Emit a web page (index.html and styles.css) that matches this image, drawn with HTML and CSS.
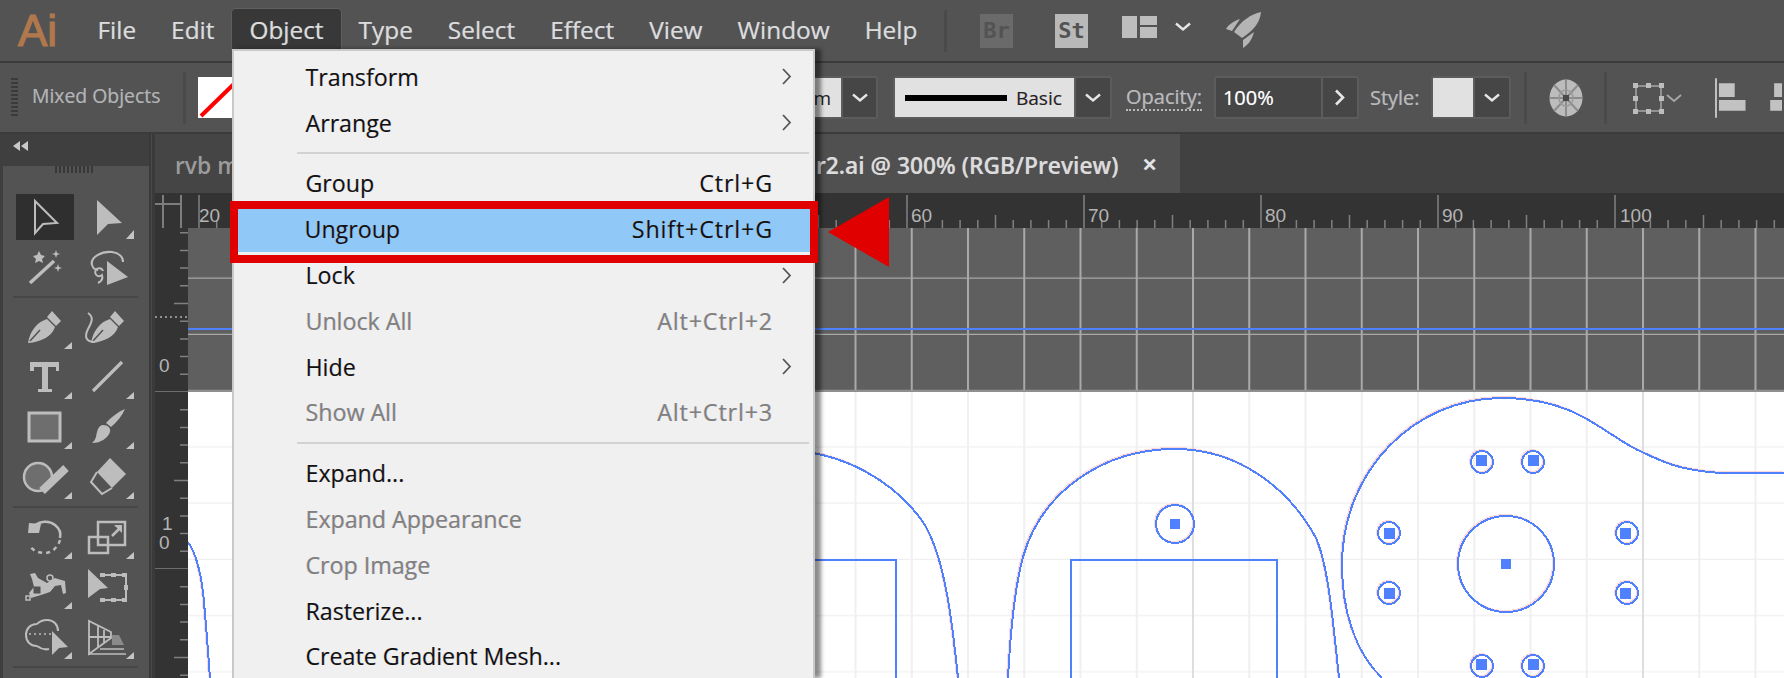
FILE: index.html
```html
<!DOCTYPE html>
<html lang="en">
<head>
    <meta charset="utf-8">
    <title>Illustrator - Object menu</title>
    <link rel="stylesheet" href="styles.css">
</head>
<body>
<div id="app">
    <div class="menubar">
        <div class="logo">Ai</div>
        <div class="menu-title">File</div>
        <div class="menu-title">Edit</div>
        <div class="menu-title open">Object</div>
        <div class="menu-title">Type</div>
        <div class="menu-title">Select</div>
        <div class="menu-title">Effect</div>
        <div class="menu-title">View</div>
        <div class="menu-title">Window</div>
        <div class="menu-title">Help</div>
        <div class="bar-sep"></div>
        <div class="app-badge br">Br</div>
        <div class="app-badge st">St</div>
        <svg class="layout-icon" width="35" height="22" viewBox="0 0 35 22"><path fill="#bdbdbd" d="M0 0h15v22H0zM18 0h17v9H18zM18 11h17v11H18z"/></svg>
        <svg class="layout-chev" width="16" height="10" viewBox="0 0 16 10"><path fill="none" stroke="#e6e6e6" stroke-width="2.4" d="M1 1.5l7 6 7-6"/></svg>
        <svg class="rocket" width="36" height="37" viewBox="1224 11 36 37"><path fill="#b4b4b4" d="M1259 11c-10 2-20 9-27 20l8 6c11-7 18-15 19-26zM1238 18c-6 2-11 5-14 10l6 2zM1252 31l-11 8v8c5-3 9-8 11-16z"/></svg>
    </div>

    <div class="controlbar">
        <div class="grip"></div>
        <div class="selection-label">Mixed Objects</div>
        <div class="bar-sep tall"></div>
        <svg class="fill-swatch" width="42" height="41" viewBox="0 0 42 41"><rect width="42" height="41" fill="#fff"/><path stroke="#f00" stroke-width="4" d="M3 39L40 3"/></svg>
        <div class="field stroke-field"><span class="field-value">m</span><span class="field-btn"><svg width="16" height="10" viewBox="0 0 16 10"><path fill="none" stroke="#e6e6e6" stroke-width="2.4" d="M1 1.5l7 6 7-6"/></svg></span></div>
        <div class="field brush-field"><span class="field-value"><span class="brush-line"></span><span class="brush-name">Basic</span></span><span class="field-btn"><svg width="16" height="10" viewBox="0 0 16 10"><path fill="none" stroke="#e6e6e6" stroke-width="2.4" d="M1 1.5l7 6 7-6"/></svg></span></div>
        <div class="ctl-label opacity-label">Opacity:</div>
        <div class="field opacity-field"><span class="opacity-value">100%</span><span class="field-btn"><svg width="11" height="17" viewBox="0 0 11 17"><path fill="none" stroke="#e6e6e6" stroke-width="2.6" d="M2 1.5l7 7-7 7"/></svg></span></div>
        <div class="ctl-label style-label">Style:</div>
        <div class="field style-field"><span class="field-value"></span><span class="field-btn"><svg width="16" height="10" viewBox="0 0 16 10"><path fill="none" stroke="#e6e6e6" stroke-width="2.4" d="M1 1.5l7 6 7-6"/></svg></span></div>
        <div class="bar-sep tall sep-a"></div>
        <svg class="globe" width="34" height="38" viewBox="0 0 34 38">
            <ellipse cx="17" cy="19" rx="16.5" ry="18.5" fill="#bcbcbc"/>
            <path fill="none" stroke="#8c8c8c" stroke-width="2" d="M17 1v36M1 19h32M5 6l24 26M29 6L5 32"/>
            <ellipse cx="17" cy="19" rx="7" ry="8" fill="none" stroke="#9a9a9a" stroke-width="1.5"/>
            <rect x="14" y="16" width="6" height="6" fill="#4a4a4a"/>
        </svg>
        <div class="bar-sep tall sep-b"></div>
        <svg class="transform-icon" width="50" height="32" viewBox="0 0 50 32">
            <path fill="none" stroke="#a8a8a8" stroke-width="1.5" d="M4 4h25v25H4z"/>
            <path fill="#bdbdbd" d="M1 1h5v5H1zM14 1h5v5h-5zM27 1h5v5h-5zM1 14h5v5H1zM27 14h5v5h-5zM1 27h5v5H1zM14 27h5v5h-5zM27 27h5v5h-5z"/>
            <path fill="none" stroke="#a8a8a8" stroke-width="1.8" d="M35 13l7 6 7-6"/>
        </svg>
        <svg class="align-icons" width="67" height="40" viewBox="1716 77 68 40">
            <path fill="#c2c2c2" d="M1716 77h2v40h-2zM1720 82h16v14h-16zM1720 99h27v11h-27zM1772 99h12v11h-12zM1776 82h8v14h-8z"/>
        </svg>
    </div>

    <div class="workarea">
        <div class="side">
            <div class="side-head"><svg width="16" height="10" viewBox="0 0 16 10"><path fill="#c8c8c8" d="M7 0v10L0 5zM15 0v10L8 5z"/></svg></div>
            <div class="tools">
                <div class="tools-grip"></div>
                <div class="tool-grid">
                    <div class="tool active"><svg width="63" height="50" viewBox="14 193 63 50"><path fill="none" stroke="#bdbdbd" stroke-width="2" d="M35 202l22 22-14 1-8 9z"/></svg></div>
                    <div class="tool"><svg width="63" height="50" viewBox="77 193 63 50"><path class="ico" d="M97 201l25 23-14 1-11 11z"/><path class="flag" d="M134 231v9h-8z"/></svg></div>
                    <div class="tool"><svg width="63" height="50" viewBox="14 243 63 50"><path class="line" stroke-width="3.5" d="M30 284l24-22"/><path class="ico" d="M39 252l2 4 4 1-3 3 1 4-4-2-4 2 1-4-3-3 4-1zM56 251l1 3 3 1-3 1-1 3-1-3-3-1 3-1zM58 265l1 3 3 1-3 1-1 3-1-3-3-1 3-1z"/></svg></div>
                    <div class="tool"><svg width="63" height="50" viewBox="77 243 63 50"><path class="line" stroke-width="2.2" d="M92 266c-2-8 10-14 20-13 7 1 11 5 11 10"/><path class="line" stroke-width="2" d="M103 272a4 4 0 1 0-1 4c1 3 0 6-4 8M92 266c1 3 3 5 6 5"/><path class="ico" d="M107 262l21 16-21 8z"/></svg></div>
                </div>
                <div class="tool-sep"></div>
                <div class="tool-grid">
                    <div class="tool"><svg width="63" height="50" viewBox="14 303 63 50"><path class="ico" d="M28 344c2-12 9-21 19-24l8 8c-3 9-13 15-27 16zM47 318l5-6 9 10-5 5z"/><path class="cut" d="M30 342l10-11"/><path class="flag" d="M72 343v7h-8z"/></svg></div>
                    <div class="tool"><svg width="63" height="50" viewBox="77 303 63 50"><path class="ico" d="M91 344c2-12 9-21 19-24l8 8c-3 9-13 15-27 16zM110 318l5-6 9 10-5 5z"/><path class="cut" d="M93 342l10-11"/><path class="line" stroke-width="2" d="M88 314c6 4 4 9 0 16-4 8-2 13 7 13"/></svg></div>
                    <div class="tool"><svg width="63" height="50" viewBox="14 353 63 50"><path class="ico" d="M30 363h29v9h-3v-4H48v22h4v3H38v-3h4V368h-8v4h-4z"/><path class="flag" d="M72 393v7h-8z"/></svg></div>
                    <div class="tool"><svg width="63" height="50" viewBox="77 353 63 50"><path class="line" stroke-width="3.2" d="M93 392l29-29"/><path class="flag" d="M134 393v7h-8z"/></svg></div>
                    <div class="tool"><svg width="63" height="50" viewBox="14 403 63 50"><rect x="29" y="414" width="31" height="28" fill="#6e6e6e" stroke="#bdbdbd" stroke-width="3"/><path class="flag" d="M72 443v7h-8z"/></svg></div>
                    <div class="tool"><svg width="63" height="50" viewBox="77 403 63 50"><path class="ico" d="M125 410c-3 7-8 13-14 18l-5-4c5-6 12-11 19-14zM103 426c5 0 8 3 7 7-2 6-9 11-18 11 4-3 4-7 5-11 1-4 3-7 6-7z"/><path class="flag" d="M134 443v7h-8z"/></svg></div>
                    <div class="tool"><svg width="63" height="50" viewBox="14 453 63 50"><circle cx="38" cy="478" r="14" fill="#6e6e6e" stroke="#bdbdbd" stroke-width="2.5"/><path class="line" stroke-width="8" stroke-linecap="butt" d="M42 492l24-23"/><path class="flag" d="M72 493v7h-8z"/></svg></div>
                    <div class="tool"><svg width="63" height="50" viewBox="77 453 63 50"><path class="ico" d="M110 459l16 16-14 14-15-16z"/><path class="line" stroke-width="2" d="M97 473l-6 10 11 12 10-6"/><path class="flag" d="M134 493v7h-8z"/></svg></div>
                </div>
                <div class="tool-sep"></div>
                <div class="tool-grid">
                    <div class="tool"><svg width="63" height="50" viewBox="14 513 63 50"><path class="line" stroke-width="2.5" d="M34 527c6-5 15-6 21-1 5 4 6 9 5 13"/><path class="line" stroke-width="2.5" stroke-dasharray="4 4" d="M60 541c-2 7-8 13-15 13-7 0-13-3-16-8"/><path class="ico" d="M29 524l12 1-2 9H28z"/><path class="flag" d="M72 553v7h-8z"/></svg></div>
                    <div class="tool"><svg width="63" height="50" viewBox="77 513 63 50"><path class="line" stroke-width="2.5" d="M98 523h27v23H98zM89 538h19v16H89z"/><path class="line" stroke-width="2.5" d="M112 537l8-8"/><path class="ico" d="M122 526v8l-8-8z"/><path class="flag" d="M134 553v7h-8z"/></svg></div>
                    <div class="tool"><svg width="63" height="50" viewBox="14 563 63 50"><path class="ico" d="M30 575l5-1 3 5 9 5 8-5 3 1 7 2 1 12-3 1-2-9-6 1-5 6-9 3-10 3-2-5 5-6-2-8z"/><circle cx="50" cy="579" r="3" fill="#535353" stroke="#bdbdbd" stroke-width="1.5"/><rect x="34" y="588" width="6" height="6" fill="#535353" stroke="#535353"/><rect x="26" y="597" width="4" height="4" fill="#535353" stroke="#bdbdbd" stroke-width="1.5"/><path class="flag" d="M72 603v7h-8z"/></svg></div>
                    <div class="tool"><svg width="63" height="50" viewBox="77 563 63 50"><path class="ico" d="M88 570l20 19-8 1-12 9z"/><path class="line" stroke-width="2" d="M101 576h25v25h-25"/><path class="ico" d="M100 574h5v4h-5zM111 574h5v4h-5zM122 574h5v4h-5zM124 586h4v5h-4zM122 599h5v4h-5zM111 599h5v4h-5zM100 599h5v4h-5z"/></svg></div>
                    <div class="tool"><svg width="63" height="50" viewBox="14 613 63 50"><path class="line" stroke-width="2" d="M37 625c-7 0-11 5-11 11s4 11 11 11M37 625c3-3 7-4 10-4 7 0 11 5 11 11M49 650c-4 1-8 0-12-3"/><path class="line" stroke-width="1.6" stroke-dasharray="2 3" d="M29 635h22"/><path class="ico" d="M52 632l16 16-9 1-7 7z"/><path class="flag" d="M72 653v7h-8z"/></svg></div>
                    <div class="tool"><svg width="63" height="50" viewBox="77 613 63 50"><path class="line" stroke-width="1.8" d="M89 622v33l22-16v-6zM89 622l22 11M98 627v22M104 631v13M89 638h22"/><path fill="#8a8a8a" d="M112 636h7l5 10h-12z"/><path class="line" stroke-width="1.6" d="M100 650h24M88 655h38"/><path class="flag" d="M134 653v7h-8z"/></svg></div>
                </div>
                <div class="tool-sep"></div>
            </div>
        </div>
        <div class="gutter"></div>
        <div class="docs">
            <div class="tabbar">
                <div class="tab inactive">rvb m</div>
                <div class="tab current"><span class="tab-name">r2.ai @ 300% (RGB/Preview)</span><span class="tab-close">&#10005;</span></div>
            </div>
            <div class="ruler-top">
                <svg class="ruler-corner" width="33" height="35" viewBox="155 193 33 35"><path fill="none" stroke="#7d7d7d" stroke-width="2" d="M155 204h26M163 195v33M181 195v33"/></svg>
                <svg class="ruler-h" width="1596" height="35" viewBox="188 193 1596 35">
                    <defs>
                        <pattern id="htick" patternUnits="userSpaceOnUse" x="906" y="193" width="177" height="35">
                            <path fill="none" stroke="#808080" stroke-width="1.5" d="M1 2v33M18.7 27v8M36.4 27v8M54.1 27v8M71.8 27v8M89.5 22v13M107.2 27v8M124.9 27v8M142.6 27v8M160.3 27v8"/>
                        </pattern>
                    </defs>
                    <rect x="188" y="193" width="1596" height="35" fill="url(#htick)"/>
                    <g class="ruler-num">
                        <text x="199" y="222">20</text>
                        <text x="911" y="222">60</text>
                        <text x="1088" y="222">70</text>
                        <text x="1265" y="222">80</text>
                        <text x="1442" y="222">90</text>
                        <text x="1620" y="222">100</text>
                    </g>
                </svg>
            </div>
            <div class="doc-body">
                <svg class="ruler-v" width="33" height="450" viewBox="155 228 33 450">
                    <defs>
                        <pattern id="vtick" patternUnits="userSpaceOnUse" x="155" y="215" width="33" height="177">
                            <path fill="none" stroke="#808080" stroke-width="1.5" d="M0 177h33M25 17.7h8M25 35.4h8M25 53.1h8M25 70.8h8M19 88.5h14M25 106.2h8M25 123.9h8M25 141.6h8M25 159.3h8"/>
                        </pattern>
                    </defs>
                    <rect x="155" y="228" width="33" height="450" fill="url(#vtick)"/>
                    <path fill="none" stroke="#b0b0b0" stroke-width="1.5" stroke-dasharray="2 3" d="M155 317h33"/>
                    <g class="ruler-num">
                        <text x="159" y="372">0</text>
                        <text x="162" y="530">1</text>
                        <text x="159" y="549">0</text>
                    </g>
                </svg>
                <svg class="canvas" width="1596" height="450" viewBox="188 228 1596 450">
                    <defs>
                        <pattern id="paste-grid" patternUnits="userSpaceOnUse" x="1192" y="222.5" width="56.25" height="56.25">
                            <path fill="none" stroke="#a9a9a9" stroke-width="2" d="M1 0v57M0 56h57"/>
                        </pattern>
                        <pattern id="board-grid" patternUnits="userSpaceOnUse" x="1192" y="391.25" width="450" height="56.25">
                            <path fill="none" stroke="#f0f0f0" stroke-width="2" d="M1 0v57M57.25 0v57M113.5 0v57M169.75 0v57M226 0v57M282.25 0v57M338.5 0v57M394.75 0v57M0 56h450"/>
                            <path fill="none" stroke="#dedede" stroke-width="2" d="M1 0v57"/>
                        </pattern>
                    </defs>
                    <rect x="188" y="228" width="1596" height="164" fill="#5f5f5f"/>
                    <rect x="188" y="228" width="1596" height="162" fill="url(#paste-grid)" shape-rendering="crispEdges"/>
                    <rect x="188" y="392" width="1596" height="286" fill="#fff"/>
                    <rect x="188" y="392" width="1596" height="286" fill="url(#board-grid)" shape-rendering="crispEdges"/>
                    <rect x="188" y="390" width="1596" height="2" fill="#8f8f8f"/>
                    <path d="M188 329h1596" stroke="#4f81ff" stroke-width="2" shape-rendering="crispEdges"/>
                    <g class="art art-pink" transform="translate(-1 -1)">
                        <use href="#artwork"/>
                    </g>
                    <g class="art art-blue">
                        <g id="artwork">
                            <path d="M188 542c7 10 12 26 15 50 3 30 5 60 7 86"/>
                            <path d="M780 450C840 450 895 480 925 525C945 560 952 620 958 678"/>
                            <path d="M1008 678C1010 640 1014 590 1023 557C1042 490 1105 449 1175 449C1240 449 1290 490 1316 538C1328 565 1333 620 1339 678"/>
                            <path d="M1382 678C1355 652 1342 610 1342 565C1342 470 1415 398 1502 398C1535 398 1562 405 1585 418C1610 432 1625 445 1642 452C1665 463 1680 470 1720 473L1784 473"/>
                            <circle cx="1175" cy="524" r="19"/>
                            <circle cx="1506" cy="564" r="48"/>
                            <circle cx="1482" cy="462" r="11"/>
                            <circle cx="1533" cy="462" r="11"/>
                            <circle cx="1389" cy="533" r="11"/>
                            <circle cx="1389" cy="593" r="11"/>
                            <circle cx="1627" cy="533" r="11"/>
                            <circle cx="1627" cy="593" r="11"/>
                            <circle cx="1482" cy="666" r="11"/>
                            <circle cx="1533" cy="666" r="11"/>
                        </g>
                        <path d="M896 678V560H300v118M1071 678V560h206v118"/>
                    </g>
                    <path fill="#4f81ff" shape-rendering="crispEdges" d="M1170 519h10v10h-10zM1501 559h10v10h-10zM1476 455h11v11h-11zM1528 455h11v11h-11zM1384 528h11v11h-11zM1384 588h11v11h-11zM1620 528h11v11h-11zM1620 588h11v11h-11zM1476 659h11v11h-11zM1528 659h11v11h-11z"/>
                </svg>
            </div>
        </div>
    </div>
</div>

<div class="menu">
    <div class="menu-row"><span>Transform</span><svg class="sub" width="10" height="17" viewBox="0 0 10 17"><path fill="none" stroke="#555" stroke-width="1.8" d="M1 1l7 7.5-7 7.5"/></svg></div>
    <div class="menu-row"><span>Arrange</span><svg class="sub" width="10" height="17" viewBox="0 0 10 17"><path fill="none" stroke="#555" stroke-width="1.8" d="M1 1l7 7.5-7 7.5"/></svg></div>
    <div class="menu-sep"></div>
    <div class="menu-row"><span>Group</span><span class="keys">Ctrl+G</span></div>
    <div class="menu-row hot"><span>Ungroup</span><span class="keys">Shift+Ctrl+G</span></div>
    <div class="menu-row"><span>Lock</span><svg class="sub" width="10" height="17" viewBox="0 0 10 17"><path fill="none" stroke="#555" stroke-width="1.8" d="M1 1l7 7.5-7 7.5"/></svg></div>
    <div class="menu-row off"><span>Unlock All</span><span class="keys">Alt+Ctrl+2</span></div>
    <div class="menu-row"><span>Hide</span><svg class="sub" width="10" height="17" viewBox="0 0 10 17"><path fill="none" stroke="#555" stroke-width="1.8" d="M1 1l7 7.5-7 7.5"/></svg></div>
    <div class="menu-row off"><span>Show All</span><span class="keys">Alt+Ctrl+3</span></div>
    <div class="menu-sep"></div>
    <div class="menu-row"><span>Expand...</span></div>
    <div class="menu-row off"><span>Expand Appearance</span></div>
    <div class="menu-row off"><span>Crop Image</span></div>
    <div class="menu-row"><span>Rasterize...</span></div>
    <div class="menu-row"><span>Create Gradient Mesh...</span></div>
</div>
<div class="callout-box"></div>
<div class="callout-arrow"></div>
</body>
</html>
```

FILE: styles.css
```css
html, body {
    margin: 0;
    padding: 0;
    overflow: hidden;
}

body {
    position: relative;
    width: 1784px;
    height: 678px;
    background: #3f3f3f;
    font-family: "Open Sans", "Noto Sans", sans-serif;
}

#app {
    display: flex;
    flex-direction: column;
    height: 678px;
}

/* top menu */
.menubar {
    display: flex;
    align-items: center;
    height: 61px;
    border-bottom: 2px solid #3b3b3b;
    background: #535353;
    box-sizing: content-box;
}

.logo {
    width: 62px;
    padding-left: 18px;
    color: #b0784c;
    font-family: "Liberation Sans", sans-serif;
    font-size: 44px;
    line-height: 50px;
    -webkit-text-stroke: 1.2px #b0784c;
}

.menu-title {
    display: flex;
    align-items: center;
    height: 40px;
    margin-bottom: 3px;
    padding: 0 17.5px;
    color: #dcdcdc;
    font-size: 24.4px;
    text-shadow: -0.6px 0 rgba(255, 200, 130, .3), 0.6px 0 rgba(110, 170, 255, .4);
}

.menu-title.open {
    border-radius: 4px 4px 0 0;
    background: #383838;
    box-shadow: 0 0 0 1px #5f5f5f;
}

.bar-sep {
    width: 3px;
    height: 42px;
    margin-left: 9px;
    background: #4a4a4a;
}

.app-badge {
    width: 33px;
    height: 34px;
    color: #535353;
    font-family: "DejaVu Sans Mono", monospace;
    font-size: 22px;
    line-height: 34px;
    text-align: center;
    font-weight: bold;
}

.app-badge.br {
    margin-left: 33px;
    background: #6a6a6a;
}

.app-badge.st {
    margin-left: 42px;
    background: #b9b9b9;
}

.layout-icon {
    margin-left: 34px;
    margin-bottom: 7px;
}

.layout-chev {
    margin-left: 18px;
    margin-bottom: 7px;
}

.rocket {
    margin-left: 35px;
}

/* control strip */
.controlbar {
    display: flex;
    align-items: center;
    height: 69px;
    border-bottom: 2px solid #3b3b3b;
    background: #535353;
    overflow: hidden;
}

.grip {
    width: 7px;
    height: 40px;
    margin-left: 11px;
    background: repeating-linear-gradient(#3a3a3a 0 2px, transparent 2px 4px);
}

.selection-label {
    width: 133px;
    margin-left: 14px;
    margin-bottom: 5px;
    color: #b4b4b4;
    font-size: 19.4px;
    white-space: nowrap;
    text-shadow: -0.5px 0 rgba(255, 200, 130, .2), 0.5px 0 rgba(110, 170, 255, .3);
}

.bar-sep.tall {
    height: 52px;
    margin-left: 18px;
}

.fill-swatch {
    margin-left: 12px;
}

.field {
    display: flex;
    height: 43px;
    box-sizing: border-box;
    border: 2px solid #5c5c5c;
    border-radius: 3px;
    background: #464646;
}

.field-value {
    display: flex;
    align-items: center;
    background: #e1e1e1;
    color: #222;
}

.field-btn {
    display: flex;
    flex: 1;
    align-items: center;
    justify-content: center;
    border-left: 2px solid #5c5c5c;
}

.stroke-field {
    width: 120px;
    margin-left: 518px;
}

.stroke-field .field-value {
    flex: none;
    width: 81px;
    padding-right: 10px;
    box-sizing: border-box;
    justify-content: flex-end;
    font-size: 19px;
}

.brush-field {
    width: 219px;
    margin-left: 15px;
}

.brush-field .field-value {
    flex: none;
    width: 179px;
}

.brush-line {
    width: 102px;
    height: 6px;
    margin-left: 10px;
    background: #000;
}

.brush-name {
    margin-left: 9px;
    font-size: 19px;
    text-shadow: -0.5px 0 rgba(255, 170, 80, .4), 0.5px 0 rgba(60, 120, 255, .4);
}

.ctl-label {
    color: #b9b9b9;
    font-size: 20px;
    font-weight: 500;
    text-shadow: -0.5px 0 rgba(255, 200, 130, .3), 0.5px 0 rgba(110, 170, 255, .4);
}

.opacity-label {
    margin-left: 14px;
    border-bottom: 2px dotted #bbb;
    line-height: 24px;
}

.opacity-field {
    width: 145px;
    margin-left: 12px;
}

.opacity-value {
    display: flex;
    align-items: center;
    width: 105px;
    padding-left: 7px;
    box-sizing: border-box;
    color: #fff;
    font-size: 20px;
    text-shadow: -0.5px 0 rgba(255, 170, 80, .5), 0.5px 0 rgba(90, 170, 255, .6);
}

.style-label {
    margin-left: 11px;
}

.style-field {
    width: 80px;
    margin-left: 11px;
}

.style-field .field-value {
    flex: none;
    width: 40px;
}

.sep-a {
    margin-left: 13px !important;
}

.globe {
    margin-left: 22px;
}

.sep-b {
    margin-left: 21px !important;
}

.transform-icon {
    margin-left: 25px;
}

.align-icons {
    margin-left: 33px;
}

/* left panel */
.workarea {
    display: flex;
    flex: 1;
    min-height: 0;
}

.side {
    width: 146px;
    margin-left: 3px;
    background: #3f3f3f;
}

.side-head {
    display: flex;
    align-items: center;
    height: 23px;
    padding-left: 10px;
}

.tools {
    height: 520px;
    margin-top: 1px;
    background: #535353;
}

.tools-grip {
    width: 40px;
    height: 7px;
    margin: 9px 0 0 52px;
    background: repeating-linear-gradient(90deg, #383838 0 2px, transparent 2px 4px);
}

.tools-grip + .tool-grid {
    margin-top: 19px;
}

.tool-grid {
    display: grid;
    grid-template-columns: 63px 63px;
    grid-auto-rows: 50px;
    margin-left: 11px;
}

.tool {
    display: block;
    height: 50px;
}

.tool svg {
    display: block;
}

.tool.active svg {
    border-radius: 5px;
    background: linear-gradient(#2f2f2f, #2f2f2f) 2px 2px / 58px 46px no-repeat;
}

.ico {
    fill: #bdbdbd;
}

.flag {
    fill: #c4c4c4;
}

.line {
    fill: none;
    stroke: #bdbdbd;
}

.cut {
    fill: none;
    stroke: #535353;
    stroke-width: 1.5;
}

.tool-sep {
    height: 2px;
    margin: 4px 11px 4px 10px;
    background: #474747;
}

.gutter {
    width: 6px;
    background: linear-gradient(90deg, #3a3a3a 0 2px, #4a4a4a 2px 3px, #3a3a3a 3px);
}

/* documents */
.docs {
    display: flex;
    flex: 1;
    flex-direction: column;
    min-width: 0;
}

.tabbar {
    display: flex;
    height: 59px;
    background: #414141;
}

.tab {
    display: flex;
    align-items: center;
    height: 59px;
    padding-top: 4px;
    box-sizing: border-box;
    font-size: 22.8px;
    font-weight: 600;
    white-space: nowrap;
}

.tab.inactive {
    width: 77px;
    padding-left: 20px;
    background: #454545;
    color: #9c9c9c;
}

.tab.current {
    width: 948px;
    padding-left: 584px;
    background: #505050;
    color: #dcdcdc;
    text-shadow: -0.5px 0 rgba(255, 190, 120, .4), 0.5px 0 rgba(110, 170, 255, .4);
}

.tab-close {
    margin-left: 24px;
    margin-bottom: 4px;
    color: #e4e4e4;
    font-size: 18px;
    font-weight: bold;
}

.ruler-top {
    display: flex;
    height: 35px;
    background: #333;
}

.ruler-corner, .ruler-h, .ruler-v, .canvas {
    display: block;
    flex: none;
}

.ruler-num text {
    fill: #b4b4b4;
    font-family: "Liberation Sans", sans-serif;
    font-size: 19px;
}

.doc-body {
    display: flex;
    height: 450px;
    background: #333;
}

.art {
    fill: none;
    stroke-width: 2;
    shape-rendering: crispEdges;
}

.art-blue {
    stroke: #4f81ff;
}

.art-pink {
    stroke: #ffc8c8;
    opacity: .7;
}

/* the open Object menu */
.menu {
    position: absolute;
    left: 232px;
    top: 49px;
    width: 583px;
    height: 629px;
    padding-top: 3px;
    box-sizing: border-box;
    border: 2px solid #c9c9c9;
    border-bottom: 0;
    background: #f0f0f0;
    box-shadow: 6px 0 4px rgba(0, 0, 0, .45);
}

.menu-row {
    display: flex;
    align-items: center;
    justify-content: space-between;
    height: 45.8px;
    padding: 0 40px 0 71.5px;
    color: #111;
    font-size: 23.2px;
    text-shadow: -0.5px 0 rgba(255, 170, 60, .35), 0.5px 0 rgba(40, 110, 255, .35);
}

.keys {
    letter-spacing: 0.9px;
}

.menu-row.hot {
    margin: 0 0 0 -1px;
    background: #90c8f8;
}

.menu-row.off {
    color: #808080;
}

.menu-sep {
    height: 2px;
    margin: 6.5px 4px 6.5px 63px;
    background: #d2d2d2;
}

.sub {
    margin-right: -19px;
}

/* red annotation */
.callout-box {
    position: absolute;
    left: 230px;
    top: 201px;
    width: 588px;
    height: 62px;
    box-sizing: border-box;
    border: 8px solid #e00000;
}

.callout-arrow {
    position: absolute;
    left: 828px;
    top: 197px;
    border-top: 35px solid transparent;
    border-bottom: 35px solid transparent;
    border-right: 61px solid #e00000;
}
```
